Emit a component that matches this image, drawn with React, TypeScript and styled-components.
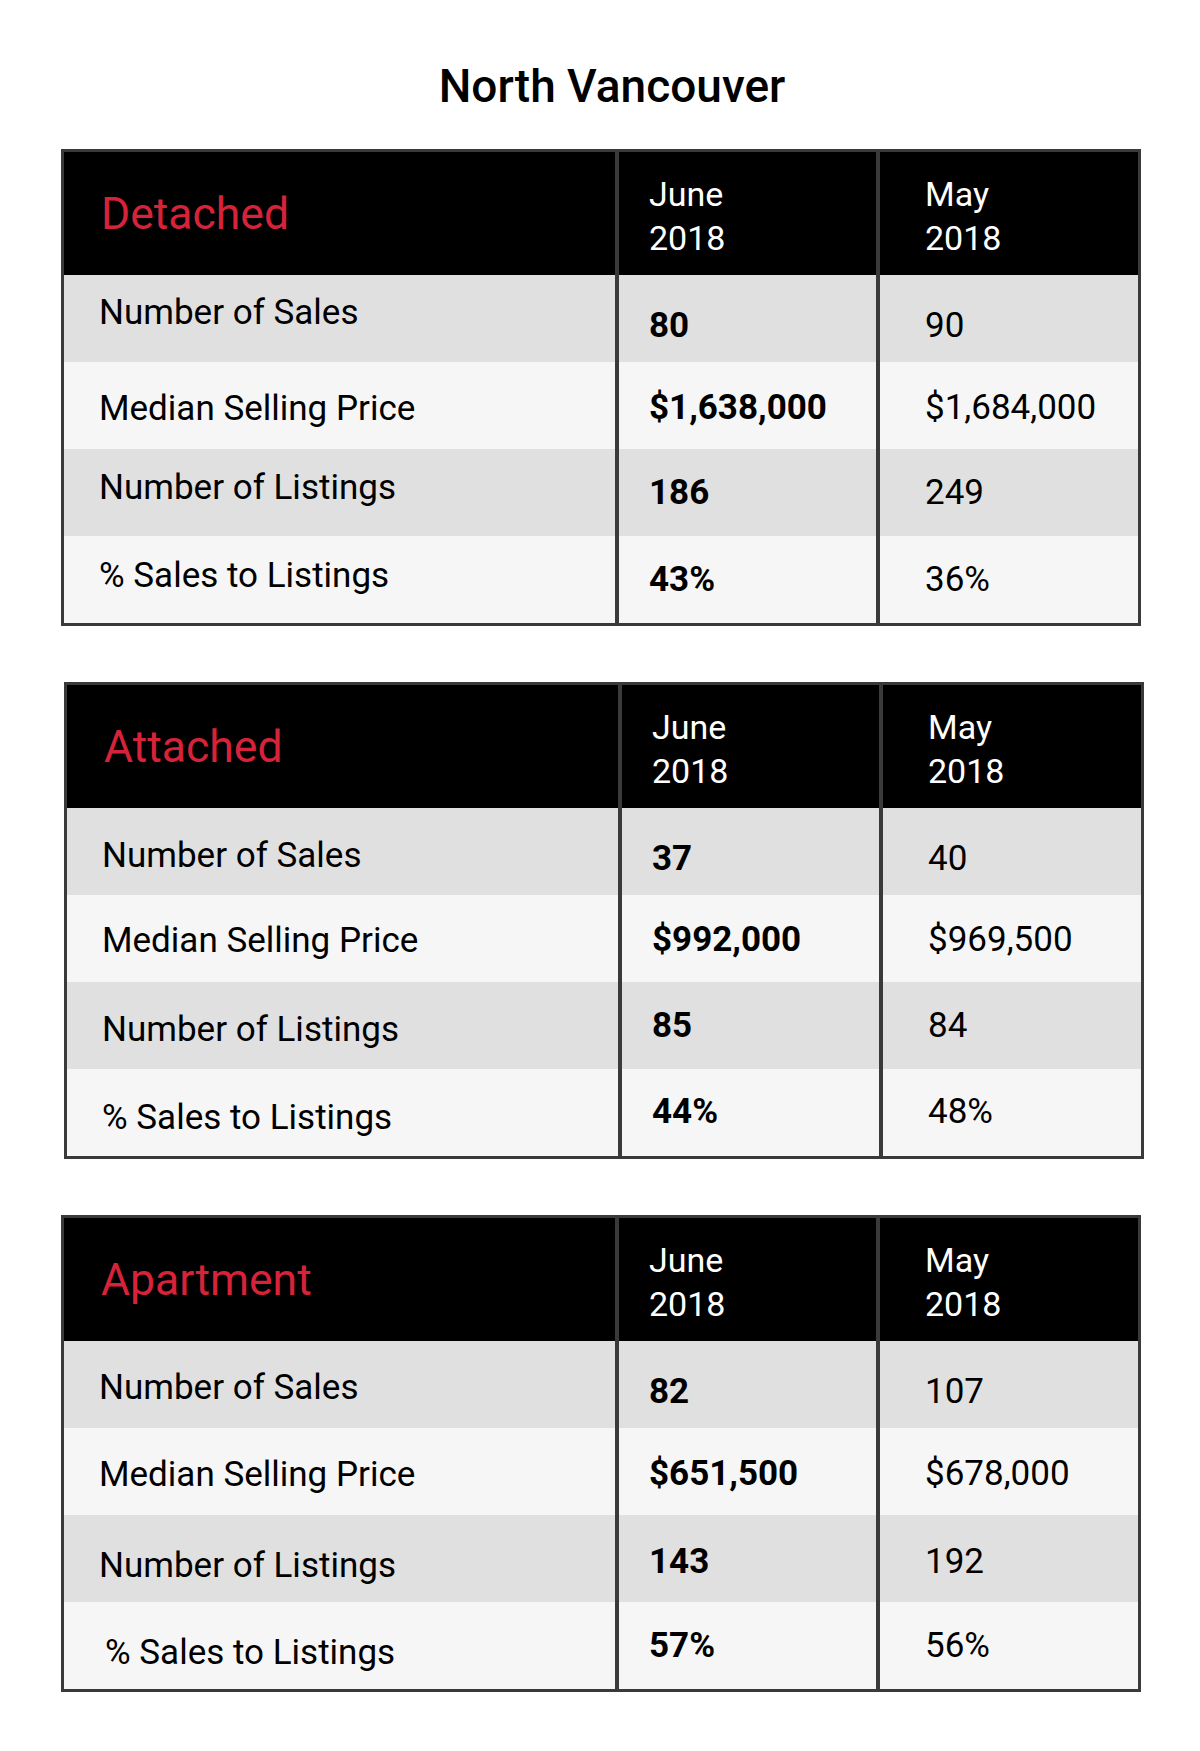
import React from 'react'
import styled, { createGlobalStyle } from 'styled-components'

type Row = {
  label: string
  june: string
  may: string
  labelDy?: number
  valueDy?: number
  indent?: number
}

type Section = {
  title: string
  x: number
  rows: Row[]
}

const sections: Section[] = [
  {
    title: 'Detached',
    x: 61,
    rows: [
      { label: 'Number of Sales', june: '80', may: '90', labelDy: -6, valueDy: 7 },
      { label: 'Median Selling Price', june: '$1,638,000', may: '$1,684,000', labelDy: 3, valueDy: 2 },
      { label: 'Number of Listings', june: '186', may: '249', labelDy: -5 },
      { label: '% Sales to Listings', june: '43%', may: '36%', labelDy: -4 },
    ],
  },
  {
    title: 'Attached',
    x: 64,
    rows: [
      { label: 'Number of Sales', june: '37', may: '40', labelDy: 4, valueDy: 7 },
      { label: 'Median Selling Price', june: '$992,000', may: '$969,500', labelDy: 2, valueDy: 1 },
      { label: 'Number of Listings', june: '85', may: '84', labelDy: 4 },
      { label: '% Sales to Listings', june: '44%', may: '48%', labelDy: 5, valueDy: -1 },
    ],
  },
  {
    title: 'Apartment',
    x: 61,
    rows: [
      { label: 'Number of Sales', june: '82', may: '107', labelDy: 3, valueDy: 7 },
      { label: 'Median Selling Price', june: '$651,500', may: '$678,000', labelDy: 3, valueDy: 2 },
      { label: 'Number of Listings', june: '143', may: '192', labelDy: 7, valueDy: 3 },
      { label: '% Sales to Listings', june: '57%', may: '56%', labelDy: 7, indent: 6 },
    ],
  },
]

const GlobalStyle = createGlobalStyle`
  html, body {
    margin: 0;
    padding: 0;
    background: #ffffff;
  }
  body {
    font-family: Roboto, 'Noto Sans', 'Liberation Sans', sans-serif;
    color: #000000;
  }
`

const Page = styled.main`
  width: 1200px;
  min-height: 1751px;
  padding-top: 58px;
  box-sizing: border-box;
`

const Title = styled.h1`
  margin: 0 0 35px;
  padding-left: 24px;
  text-align: center;
  font-size: 46px;
  font-weight: 500;
  line-height: 56px;
  color: #000000;
`

const Table = styled.section<{ $x: number }>`
  width: 1080px;
  margin: 0 0 56px ${(p) => p.$x}px;
  box-sizing: border-box;
  border: 3px solid #3a3a3a;
  display: grid;
  grid-template-columns: 551px 261px 262px;
`

const padFor = (col: number) => (col === 0 ? 35 : col === 1 ? 30 : 45)

const Cell = styled.div<{ $col: number }>`
  display: flex;
  align-items: center;
  box-sizing: border-box;
  padding-left: ${(p) => padFor(p.$col)}px;
  border-left: ${(p) => (p.$col === 0 ? 'none' : '4px solid #3a3a3a')};
`

const HeadCell = styled(Cell)`
  height: 123px;
  background: #000000;
`

const SectionName = styled.span`
  padding-left: 2px;
  font-size: 44.5px;
  line-height: 52px;
  color: #d7233a;
`

const Period = styled.span`
  font-size: 34px;
  line-height: 44px;
  color: #ffffff;
  padding-top: 4px;
`

const BodyCell = styled(Cell)<{ $stripe: boolean }>`
  height: 87px;
  background: ${(p) => (p.$stripe ? '#e0e0e0' : '#f6f6f6')};
`

const Text = styled.span<{ $bold?: boolean; $dy?: number; $indent?: number }>`
  font-size: 35px;
  line-height: 40px;
  font-weight: ${(p) => (p.$bold ? 700 : 400)};
  color: #000000;
  margin-left: ${(p) => p.$indent ?? 0}px;
  transform: translateY(${(p) => p.$dy ?? 0}px);
`

const PriceTable = ({ section }: { section: Section }) => (
  <Table $x={section.x}>
    <HeadCell $col={0}>
      <SectionName>{section.title}</SectionName>
    </HeadCell>
    <HeadCell $col={1}>
      <Period>
        June
        <br />
        2018
      </Period>
    </HeadCell>
    <HeadCell $col={2}>
      <Period>
        May
        <br />
        2018
      </Period>
    </HeadCell>
    {section.rows.map((row, i) => (
      <React.Fragment key={row.label}>
        <BodyCell $col={0} $stripe={i % 2 === 0}>
          <Text $dy={row.labelDy} $indent={row.indent}>
            {row.label}
          </Text>
        </BodyCell>
        <BodyCell $col={1} $stripe={i % 2 === 0}>
          <Text $bold $dy={row.valueDy}>
            {row.june}
          </Text>
        </BodyCell>
        <BodyCell $col={2} $stripe={i % 2 === 0}>
          <Text $dy={row.valueDy}>{row.may}</Text>
        </BodyCell>
      </React.Fragment>
    ))}
  </Table>
)

export default function App() {
  return (
    <>
      <GlobalStyle />
      <Page>
        <Title>North Vancouver</Title>
        {sections.map((s) => (
          <PriceTable key={s.title} section={s} />
        ))}
      </Page>
    </>
  )
}
